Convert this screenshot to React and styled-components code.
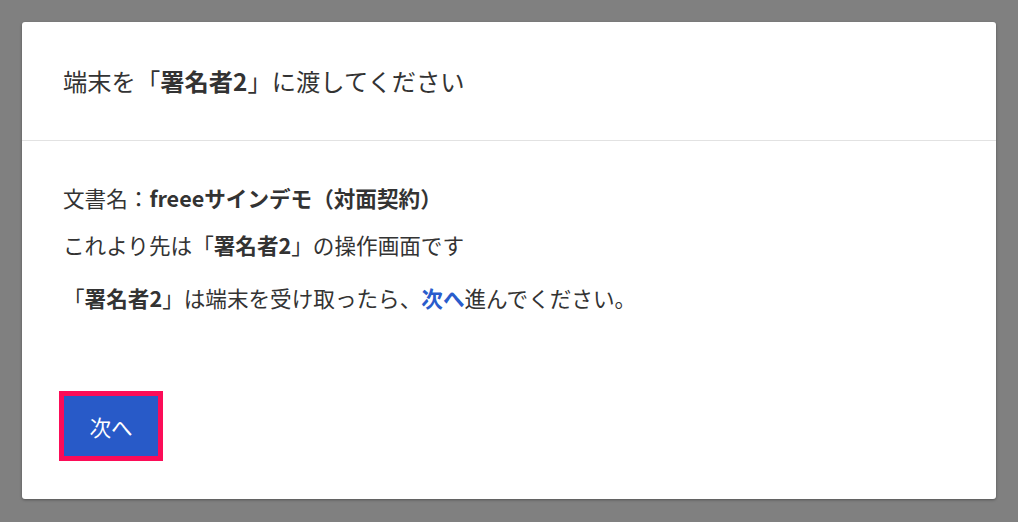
import styled, { createGlobalStyle } from 'styled-components';

const GlobalStyle = createGlobalStyle`
    html, body {
        margin: 0;
        padding: 0;
        background: #808080;
    }
    body {
        font-family: "Noto Sans CJK JP", "Noto Sans", sans-serif;
        color: #333333;
        text-spacing-trim: space-all;
    }
`;

function App() {
    return (
        <>
            <GlobalStyle />
            <Overlay>
                <Dialog>
                    <DialogHeader>
                        <Title>
                            端末を「<Strong>署名者2</Strong>」に渡してください
                        </Title>
                    </DialogHeader>
                    <DialogBody>
                        <Line>
                            文書名：<Strong>freeeサインデモ（対面契約）</Strong>
                        </Line>
                        <Line $gap={16}>
                            これより先は「<Strong>署名者2</Strong>」の操作画面です
                        </Line>
                        <Line $gap={22}>
                            「<Strong>署名者2</Strong>」は端末を受け取ったら、
                            <LinkText>次へ</LinkText>進んでください。
                        </Line>
                        <NextButton type="button">次へ</NextButton>
                    </DialogBody>
                </Dialog>
            </Overlay>
        </>
    );
}

export default App;

const Overlay = styled.div`
    padding: 22px;
    min-height: 522px;
    box-sizing: border-box;
`;
const Dialog = styled.div`
    width: 974px;
    height: 477px;
    box-sizing: border-box;
    background: #ffffff;
    border-radius: 3px;
    box-shadow: 0 1px 3px rgba(0, 0, 0, 0.35);
    display: flex;
    flex-direction: column;
`;
const DialogHeader = styled.div`
    height: 118px;
    padding: 0 41px;
    display: flex;
    align-items: center;
    border-bottom: 1px solid #e2e2e2;
`;
const Title = styled.h1`
    margin: 0;
    font-size: 24.3px;
    font-weight: 400;
    line-height: 1.5;
`;
const Strong = styled.span`
    font-weight: 700;
`;
const DialogBody = styled.div`
    padding: 41px 41px 0;
    display: flex;
    flex-direction: column;
    align-items: flex-start;
`;
const Line = styled.p`
    margin: ${(p) => p.$gap || 0}px 0 0;
    font-size: 21.6px;
    line-height: 31px;
`;
const LinkText = styled.span`
    color: #2a5ccc;
    font-weight: 700;
`;
const NextButton = styled.button`
    margin: 83px 0 0 1px;
    width: 94px;
    height: 60px;
    border: none;
    border-radius: 0;
    background: #285ac8;
    color: #ffffff;
    font-family: "Noto Sans CJK JP", "Noto Sans", sans-serif;
    font-size: 21.6px;
    outline: 5px solid #fc0c58;
    cursor: pointer;
`;
